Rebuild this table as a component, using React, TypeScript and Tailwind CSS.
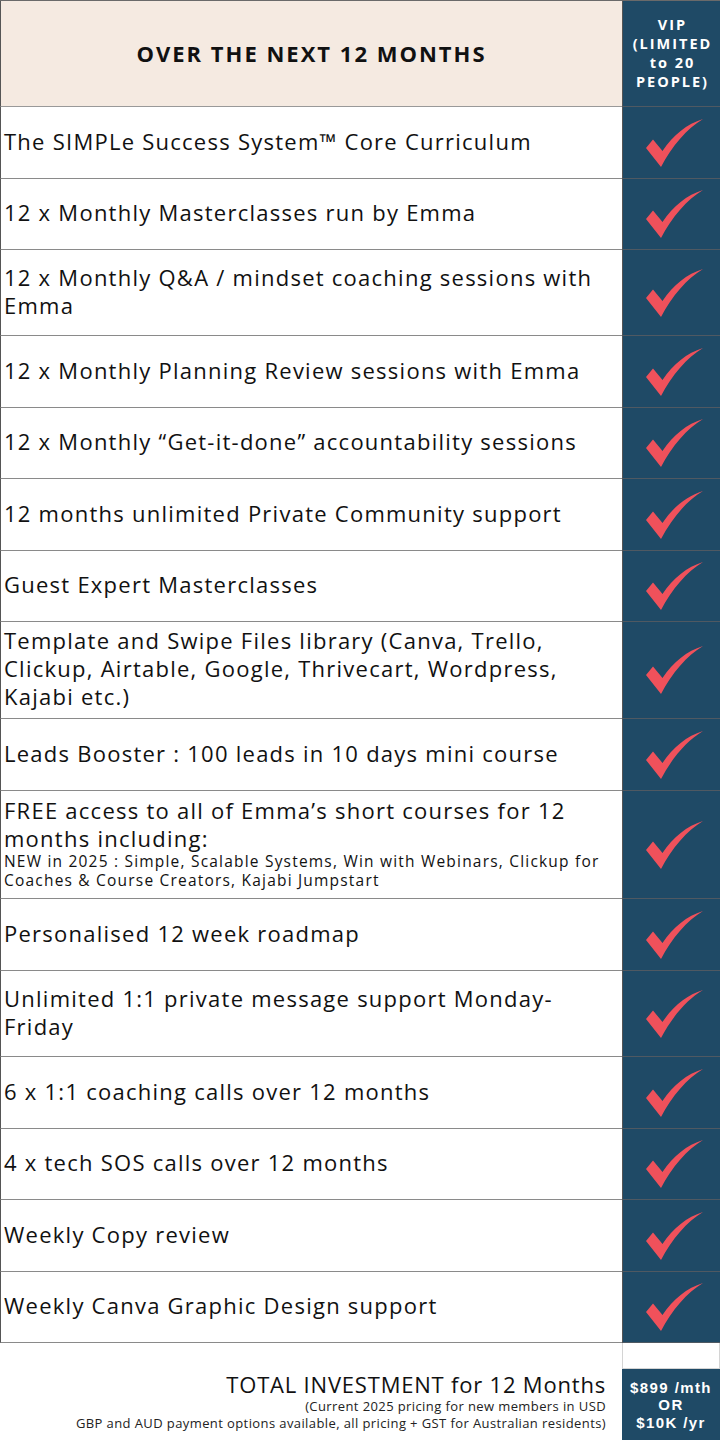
import React from "react";

type Row = { h: number; lines: React.ReactNode };

const Check = () => (
  <svg width="57" height="48" viewBox="0 0 57 48" className="ml-[6px]">
    <path d="M0 29 L7 20.5 L16.5 32 C 27 16, 41 5, 57 0 C 41 9.5, 26 27, 15 48 Z" fill="#f0515b" />
  </svg>
);

const rows: Row[] = [
  { h: 72, lines: "The SIMPLe Success System™ Core Curriculum" },
  { h: 71, lines: "12 x Monthly Masterclasses run by Emma" },
  { h: 86, lines: "12 x Monthly Q&A / mindset coaching sessions with Emma" },
  { h: 72, lines: "12 x Monthly Planning Review sessions with Emma" },
  { h: 71, lines: "12 x Monthly “Get-it-done” accountability sessions" },
  { h: 72, lines: "12 months unlimited Private Community support" },
  { h: 71, lines: "Guest Expert Masterclasses" },
  {
    h: 97,
    lines: "Template and Swipe Files library (Canva, Trello, Clickup, Airtable, Google, Thrivecart, Wordpress, Kajabi etc.)",
  },
  { h: 72, lines: "Leads Booster : 100 leads in 10 days mini course" },
  {
    h: 108,
    lines: (
      <>
        <div>FREE access to all of Emma’s short courses for 12 months including:</div>
        <div className="text-[15.5px] leading-[19px] tracking-[1.2px]">
          NEW in 2025 : Simple, Scalable Systems, Win with Webinars, Clickup for Coaches &amp; Course Creators, Kajabi
          Jumpstart
        </div>
      </>
    ),
  },
  { h: 72, lines: "Personalised 12 week roadmap" },
  { h: 86, lines: "Unlimited 1:1 private message support Monday-Friday" },
  { h: 72, lines: "6 x 1:1 coaching calls over 12 months" },
  { h: 71, lines: "4 x tech SOS calls over 12 months" },
  { h: 72, lines: "Weekly Copy review" },
  { h: 71, lines: "Weekly Canva Graphic Design support" },
];

export default function App() {
  return (
    <div
      className="w-[720px] h-[1440px] bg-white text-[#111] overflow-hidden"
      style={{ fontFamily: '"Open Sans", "Liberation Sans", sans-serif' }}
    >
      <div className="border-t border-[#6a6a6a]">
        {/* header */}
        <div className="flex h-[106px]">
          <div className="w-[622px] bg-[#f5eae1] border-l border-l-[#555] border-b border-b-[#999] flex items-center justify-center">
            <span className="font-bold text-[22px] tracking-[2px] text-[#111]">OVER THE NEXT 12 MONTHS</span>
          </div>
          <div className="flex-1 bg-[#1f4a66] border-l border-l-[#555] border-b border-b-[#4f5962] flex items-center justify-center">
            <span className="text-white font-bold text-[14.5px] leading-[19px] tracking-[2px] text-center ml-[2px] -mt-[2px]">
              VIP
              <br />
              (LIMITED
              <br />
              to 20
              <br />
              PEOPLE)
            </span>
          </div>
        </div>
        {rows.map((r, i) => (
          <div key={i} className="flex" style={{ height: r.h }}>
            <div className="w-[622px] bg-white border-l border-l-[#555] border-b border-b-[#8a8a8a] flex items-center pl-[3px] pr-[10px]">
              <div className="text-[22px] leading-[28px] tracking-[1.25px] font-normal text-[#111] -mt-[4px]">
                {r.lines}
              </div>
            </div>
            <div className="flex-1 bg-[#1f4a66] border-l border-l-[#555] border-b border-b-[#4f5962] flex items-center justify-center">
              <Check />
            </div>
          </div>
        ))}
      </div>
      {/* footer */}
      <div className="flex h-[98px]">
        <div className="w-[622px] flex flex-col items-end justify-start pt-[28px] pr-[16px] text-right">
          <div className="text-[22px] leading-[26px] tracking-[0.8px] text-[#111]">TOTAL INVESTMENT for 12 Months</div>
          <div className="text-[13px] leading-[17px] tracking-[0.4px] text-[#222] mt-[1px]">
            (Current 2025 pricing for new members in USD
            <br />
            GBP and AUD payment options available, all pricing + GST for Australian residents)
          </div>
        </div>
        <div className="flex-1 flex flex-col">
          <div className="h-[26px] border-l border-r border-b border-[#d4d4d4] bg-white" />
          <div
            className="flex-1 bg-[#1f4a66] flex flex-col items-center justify-center text-white font-bold text-[15px] leading-[17.5px] tracking-[1.4px] text-center"
            style={{ fontFamily: '"Liberation Sans", Arial, sans-serif' }}
          >
            <div>$899 /mth</div>
            <div>OR</div>
            <div>$10K /yr</div>
          </div>
        </div>
      </div>
    </div>
  );
}
